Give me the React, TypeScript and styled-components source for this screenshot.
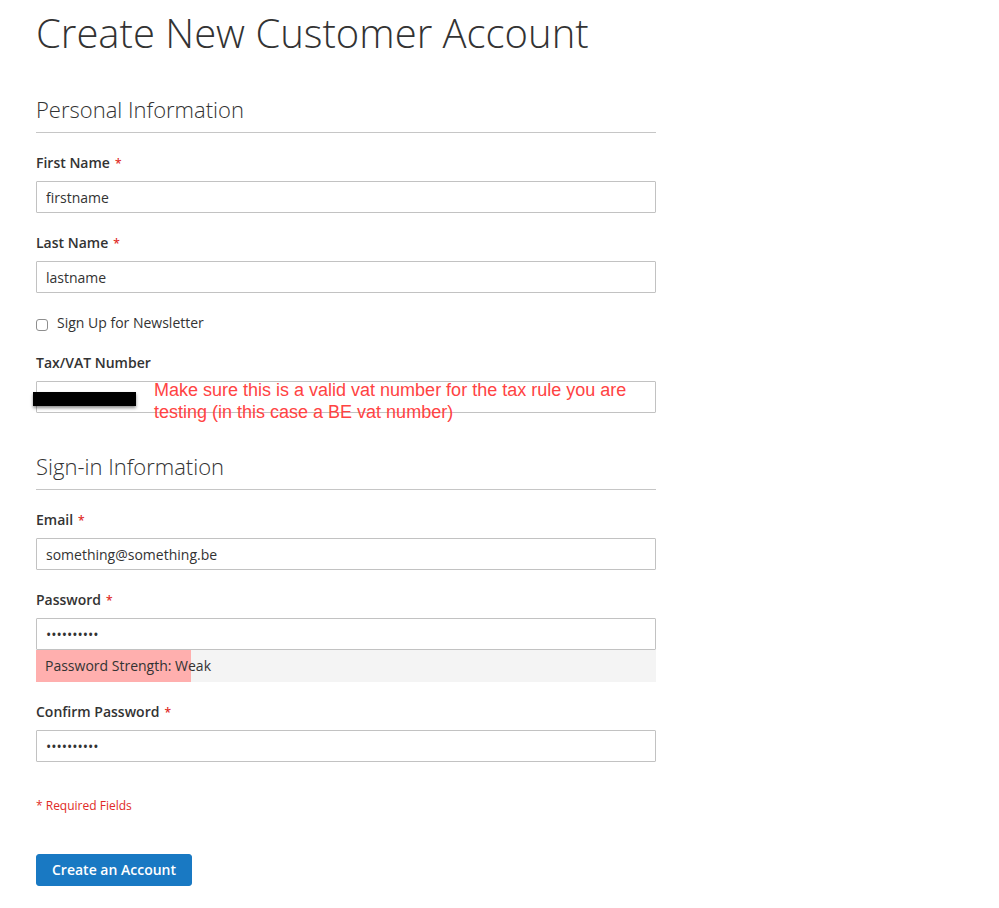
import React from "react";
import styled, { createGlobalStyle } from "styled-components";

const Global = createGlobalStyle`
  html, body { margin: 0; padding: 0; background: #fff; }
  body { font-family: "Open Sans", "Liberation Sans", sans-serif; color: #333; }
  * { box-sizing: border-box; }
`;

const Page = styled.div`
  padding: 11px 0 20px 36px;
  width: 656px;
`;

const Title = styled.h1`
  margin: 0 0 41px;
  font-size: 40px;
  font-weight: 300;
  line-height: 44px;
  color: #333;
  white-space: nowrap;
`;

const Fieldset = styled.fieldset`
  border: 0;
  margin: 0 0 40px;
  padding: 0;
  min-width: 0;
  &:last-of-type { margin-bottom: 0; }
`;

const Legend = styled.legend`
  display: block;
  width: 100%;
  font-size: 22px;
  font-weight: 300;
  line-height: 26px;
  padding: 0 0 10px;
  margin: 0 0 20px;
  border-bottom: 1px solid #c6c6c6;
  color: #333;
`;

const Field = styled.div`
  position: relative;
  margin: 0 0 20px;
  &:last-child { margin-bottom: 0; }
`;

const Label = styled.label`
  display: block;
  font-size: 14px;
  font-weight: 600;
  line-height: 20px;
  height: 20px;
  margin: 0 0 8px;
  color: #333;
`;

const Star = styled.span`
  color: #e02b27;
  font-size: 12px;
  line-height: 1;
  margin-left: 5px;
  font-weight: 600;
`;

const Input = styled.input`
  display: block;
  width: 100%;
  height: 32px;
  border: 1px solid #c2c2c2;
  border-radius: 1px;
  padding: 0 9px;
  font-family: "Open Sans", "Liberation Sans", sans-serif;
  font-size: 14px;
  color: #333;
  background: #fff;
  outline: none;
  margin: 0;
`;

const CheckRow = styled.div`
  display: flex;
  align-items: center;
  height: 20px;
  margin: 0 0 20px;
`;

const Box = styled.span`
  width: 12px;
  height: 12px;
  border: 1px solid #8e8e8e;
  border-radius: 3px;
  background: #fff;
  margin: 4px 9px 0 0;
  flex: none;
`;

const CheckLabel = styled.span`
  font-size: 14px;
  line-height: 20px;
  color: #333;
`;

const Redaction = styled.div`
  position: absolute;
  left: -3px;
  top: 39px;
  width: 103px;
  height: 14px;
  background: #000;
  box-shadow: 0 2px 3px rgba(0, 0, 0, 0.45);
`;

const Note = styled.div`
  position: absolute;
  left: 118px;
  top: 26px;
  width: 520px;
  font-family: Arial, "Liberation Sans", Helvetica, sans-serif;
  font-size: 18px;
  line-height: 22px;
  color: #ff4343;
`;

const Meter = styled.div`
  position: relative;
  height: 32px;
  background: #f4f4f4;
  padding: 0 9px;
  font-size: 14px;
  line-height: 32px;
  color: #333;
  &::before {
    content: "";
    position: absolute;
    left: 0;
    top: 0;
    bottom: 0;
    width: ${(p: { $pct: number }) => p.$pct}%;
    background: #ffafae;
  }
`;

const MeterText = styled.span`
  position: relative;
`;

const Required = styled.div`
  font-size: 12px;
  line-height: 17px;
  color: #e02b27;
  margin: 35px 0 40px;
`;

const Button = styled.button`
  display: inline-block;
  height: 32px;
  padding: 0 15px;
  border: 1px solid #1979c3;
  border-radius: 3px;
  background: #1979c3;
  color: #fff;
  font-family: "Open Sans", "Liberation Sans", sans-serif;
  font-size: 14px;
  font-weight: 600;
  line-height: 30px;
  cursor: pointer;
`;

export default function App() {
  return (
    <>
      <Global />
      <Page>
        <Title>Create New Customer Account</Title>
        <Fieldset>
          <Legend>Personal Information</Legend>
          <Field>
            <Label>First Name<Star>*</Star></Label>
            <Input defaultValue="firstname" readOnly />
          </Field>
          <Field>
            <Label>Last Name<Star>*</Star></Label>
            <Input defaultValue="lastname" readOnly />
          </Field>
          <CheckRow>
            <Box />
            <CheckLabel>Sign Up for Newsletter</CheckLabel>
          </CheckRow>
          <Field>
            <Label>Tax/VAT Number</Label>
            <Input readOnly />
            <Redaction />
            <Note>
              Make sure this is a valid vat number for the tax rule you are testing (in this case a BE vat number)
            </Note>
          </Field>
        </Fieldset>
        <Fieldset>
          <Legend>Sign-in Information</Legend>
          <Field>
            <Label>Email<Star>*</Star></Label>
            <Input defaultValue="something@something.be" readOnly />
          </Field>
          <Field>
            <Label>Password<Star>*</Star></Label>
            <Input type="password" defaultValue="1234567890" readOnly />
            <Meter $pct={25}>
              <MeterText>Password Strength: Weak</MeterText>
            </Meter>
          </Field>
          <Field>
            <Label>Confirm Password<Star>*</Star></Label>
            <Input type="password" defaultValue="1234567890" readOnly />
          </Field>
        </Fieldset>
        <Required>* Required Fields</Required>
        <Button>Create an Account</Button>
      </Page>
    </>
  );
}
